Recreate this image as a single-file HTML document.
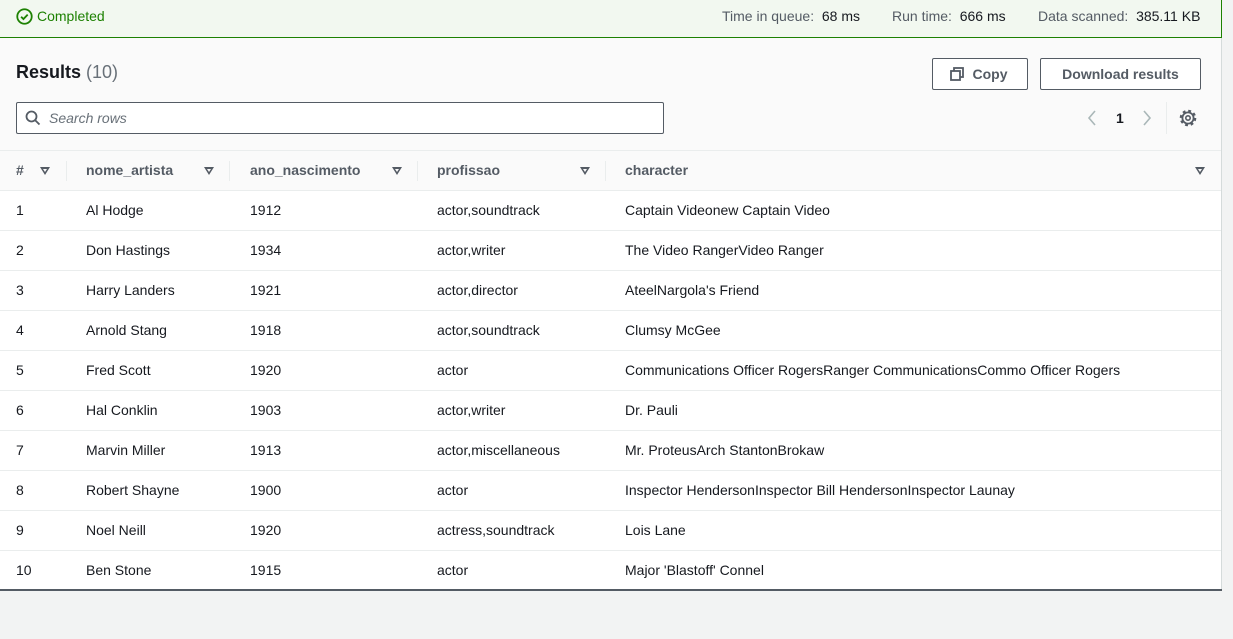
<!DOCTYPE html>
<html><head><meta charset="utf-8"><style>
*{margin:0;padding:0;box-sizing:border-box}
body{width:1233px;height:639px;background:#f2f3f3;font-family:"Liberation Sans",sans-serif;font-size:14px;color:#16191f;position:relative;overflow:hidden}
.a{position:absolute;white-space:nowrap}
#banner{position:absolute;left:0;top:0;width:1222px;height:38px;background:#f2f8f0;border-bottom:1px solid #1d8102;border-right:1px solid #1d8102}
#panel{position:absolute;left:0;top:38px;width:1222px;height:553px;background:#fafafa;border-right:1px solid #d5dbdb;border-bottom:2px solid #545b64}
.btn{position:absolute;top:58px;height:32px;border:1px solid #545b64;border-radius:2px;background:#fff;font-weight:bold;color:#545b64;font-size:14px;line-height:30px;text-align:center}
.row{position:absolute;left:0;width:1221px;height:40px;background:#fff;border-top:1px solid #eaeded}
.row span,.hdr span{position:absolute;top:11px}
.hdr{position:absolute;left:0;top:150px;width:1221px;height:40px;border-top:1px solid #eaeded;background:#fafafa;font-weight:bold;color:#545b64}
.tri{position:absolute;top:16px;width:0;height:0;border-left:5px solid transparent;border-right:5px solid transparent;border-top:8px solid #545b64}
.tri:after{content:"";position:absolute;left:-2px;top:-6px;border-left:2px solid transparent;border-right:2px solid transparent;border-top:3px solid #fafafa}
.div{position:absolute;top:10px;width:1px;height:20px;background:#eaeded}
</style></head><body>
<div id="banner">
<svg class="a" style="left:16px;top:8px" width="17" height="17" viewBox="0 0 16 16"><circle cx="8" cy="8" r="6.8" fill="none" stroke="#1d8102" stroke-width="1.7"/><path d="M4.8 8.2l2.2 2.2 4-4.2" fill="none" stroke="#1d8102" stroke-width="1.7"/></svg>
<span class="a" style="left:37px;top:8px;color:#1d8102">Completed</span>
<span class="a" style="left:722px;top:8px;color:#545b64">Time in queue:&nbsp; <span style="color:#16191f">68 ms</span></span>
<span class="a" style="left:892px;top:8px;color:#545b64">Run time:&nbsp; <span style="color:#16191f">666 ms</span></span>
<span class="a" style="left:1038px;top:8px;color:#545b64">Data scanned:&nbsp; <span style="color:#16191f">385.11 KB</span></span>
</div>
<div id="panel"></div>
<span class="a" style="left:16px;top:62px;font-size:18px;font-weight:bold">Results <span style="font-weight:normal;color:#687078">(10)</span></span>
<div class="btn" style="left:932px;width:96px"><svg style="position:absolute;left:17px;top:8px" width="14" height="14" viewBox="0 0 14 14"><rect x="4" y="1" width="9" height="9" fill="none" stroke="#545b64" stroke-width="1.8"/><rect x="1" y="4" width="9" height="9" fill="#fff" stroke="#545b64" stroke-width="1.8"/></svg><span style="margin-left:20px">Copy</span></div>
<div class="btn" style="left:1040px;width:161px">Download results</div>
<div class="a" style="left:16px;top:102px;width:648px;height:32px;border:1px solid #545b64;border-radius:2px;background:#fff"></div>
<svg class="a" style="left:25px;top:110px" width="16" height="16" viewBox="0 0 16 16"><circle cx="6.5" cy="6.5" r="5" fill="none" stroke="#545b64" stroke-width="1.8"/><path d="M10.2 10.2L14.5 14.5" stroke="#545b64" stroke-width="1.8"/></svg>
<span class="a" style="left:49px;top:110px;font-style:italic;color:#687078">Search rows</span>
<svg class="a" style="left:1086px;top:110px" width="12" height="16" viewBox="0 0 12 16"><path d="M9 1L3 8l6 7" fill="none" stroke="#aab7b8" stroke-width="1.6"/></svg>
<span class="a" style="left:1116px;top:110px;font-weight:bold;color:#16191f">1</span>
<svg class="a" style="left:1141px;top:110px" width="12" height="16" viewBox="0 0 12 16"><path d="M3 1l6 7-6 7" fill="none" stroke="#aab7b8" stroke-width="1.6"/></svg>
<div class="a" style="left:1166px;top:102px;width:1px;height:32px;background:#eaeded"></div>
<svg class="a" style="left:1179px;top:109px" width="18" height="18" viewBox="0 0 18 18"><circle cx="9" cy="9" r="7" fill="none" stroke="#545b64" stroke-width="2.6" stroke-dasharray="2.75 2.75"/><circle cx="9" cy="9" r="5.6" fill="none" stroke="#545b64" stroke-width="1.8"/><circle cx="9" cy="9" r="2.2" fill="none" stroke="#545b64" stroke-width="1.6"/></svg>
<div class="hdr">
<span style="left:16px">#</span><div class="tri" style="left:40px"></div><div class="div" style="left:66px"></div>
<span style="left:86px">nome_artista</span><div class="tri" style="left:204px"></div><div class="div" style="left:229px"></div>
<span style="left:250px">ano_nascimento</span><div class="tri" style="left:392px"></div><div class="div" style="left:417px"></div>
<span style="left:437px">profissao</span><div class="tri" style="left:580px"></div><div class="div" style="left:605px"></div>
<span style="left:625px">character</span><div class="tri" style="left:1195px"></div>
</div>
<div class="row" style="top:190px"><span style="left:16px">1</span><span style="left:86px">Al Hodge</span><span style="left:250px">1912</span><span style="left:437px">actor,soundtrack</span><span style="left:625px">Captain Videonew Captain Video</span></div>
<div class="row" style="top:230px"><span style="left:16px">2</span><span style="left:86px">Don Hastings</span><span style="left:250px">1934</span><span style="left:437px">actor,writer</span><span style="left:625px">The Video RangerVideo Ranger</span></div>
<div class="row" style="top:270px"><span style="left:16px">3</span><span style="left:86px">Harry Landers</span><span style="left:250px">1921</span><span style="left:437px">actor,director</span><span style="left:625px">AteelNargola's Friend</span></div>
<div class="row" style="top:310px"><span style="left:16px">4</span><span style="left:86px">Arnold Stang</span><span style="left:250px">1918</span><span style="left:437px">actor,soundtrack</span><span style="left:625px">Clumsy McGee</span></div>
<div class="row" style="top:350px"><span style="left:16px">5</span><span style="left:86px">Fred Scott</span><span style="left:250px">1920</span><span style="left:437px">actor</span><span style="left:625px">Communications Officer RogersRanger CommunicationsCommo Officer Rogers</span></div>
<div class="row" style="top:390px"><span style="left:16px">6</span><span style="left:86px">Hal Conklin</span><span style="left:250px">1903</span><span style="left:437px">actor,writer</span><span style="left:625px">Dr. Pauli</span></div>
<div class="row" style="top:430px"><span style="left:16px">7</span><span style="left:86px">Marvin Miller</span><span style="left:250px">1913</span><span style="left:437px">actor,miscellaneous</span><span style="left:625px">Mr. ProteusArch StantonBrokaw</span></div>
<div class="row" style="top:470px"><span style="left:16px">8</span><span style="left:86px">Robert Shayne</span><span style="left:250px">1900</span><span style="left:437px">actor</span><span style="left:625px">Inspector HendersonInspector Bill HendersonInspector Launay</span></div>
<div class="row" style="top:510px"><span style="left:16px">9</span><span style="left:86px">Noel Neill</span><span style="left:250px">1920</span><span style="left:437px">actress,soundtrack</span><span style="left:625px">Lois Lane</span></div>
<div class="row" style="top:550px"><span style="left:16px">10</span><span style="left:86px">Ben Stone</span><span style="left:250px">1915</span><span style="left:437px">actor</span><span style="left:625px">Major 'Blastoff' Connel</span></div>
<div class="a" style="left:0;top:589px;width:1222px;height:2px;background:#545b64"></div>
</body></html>
